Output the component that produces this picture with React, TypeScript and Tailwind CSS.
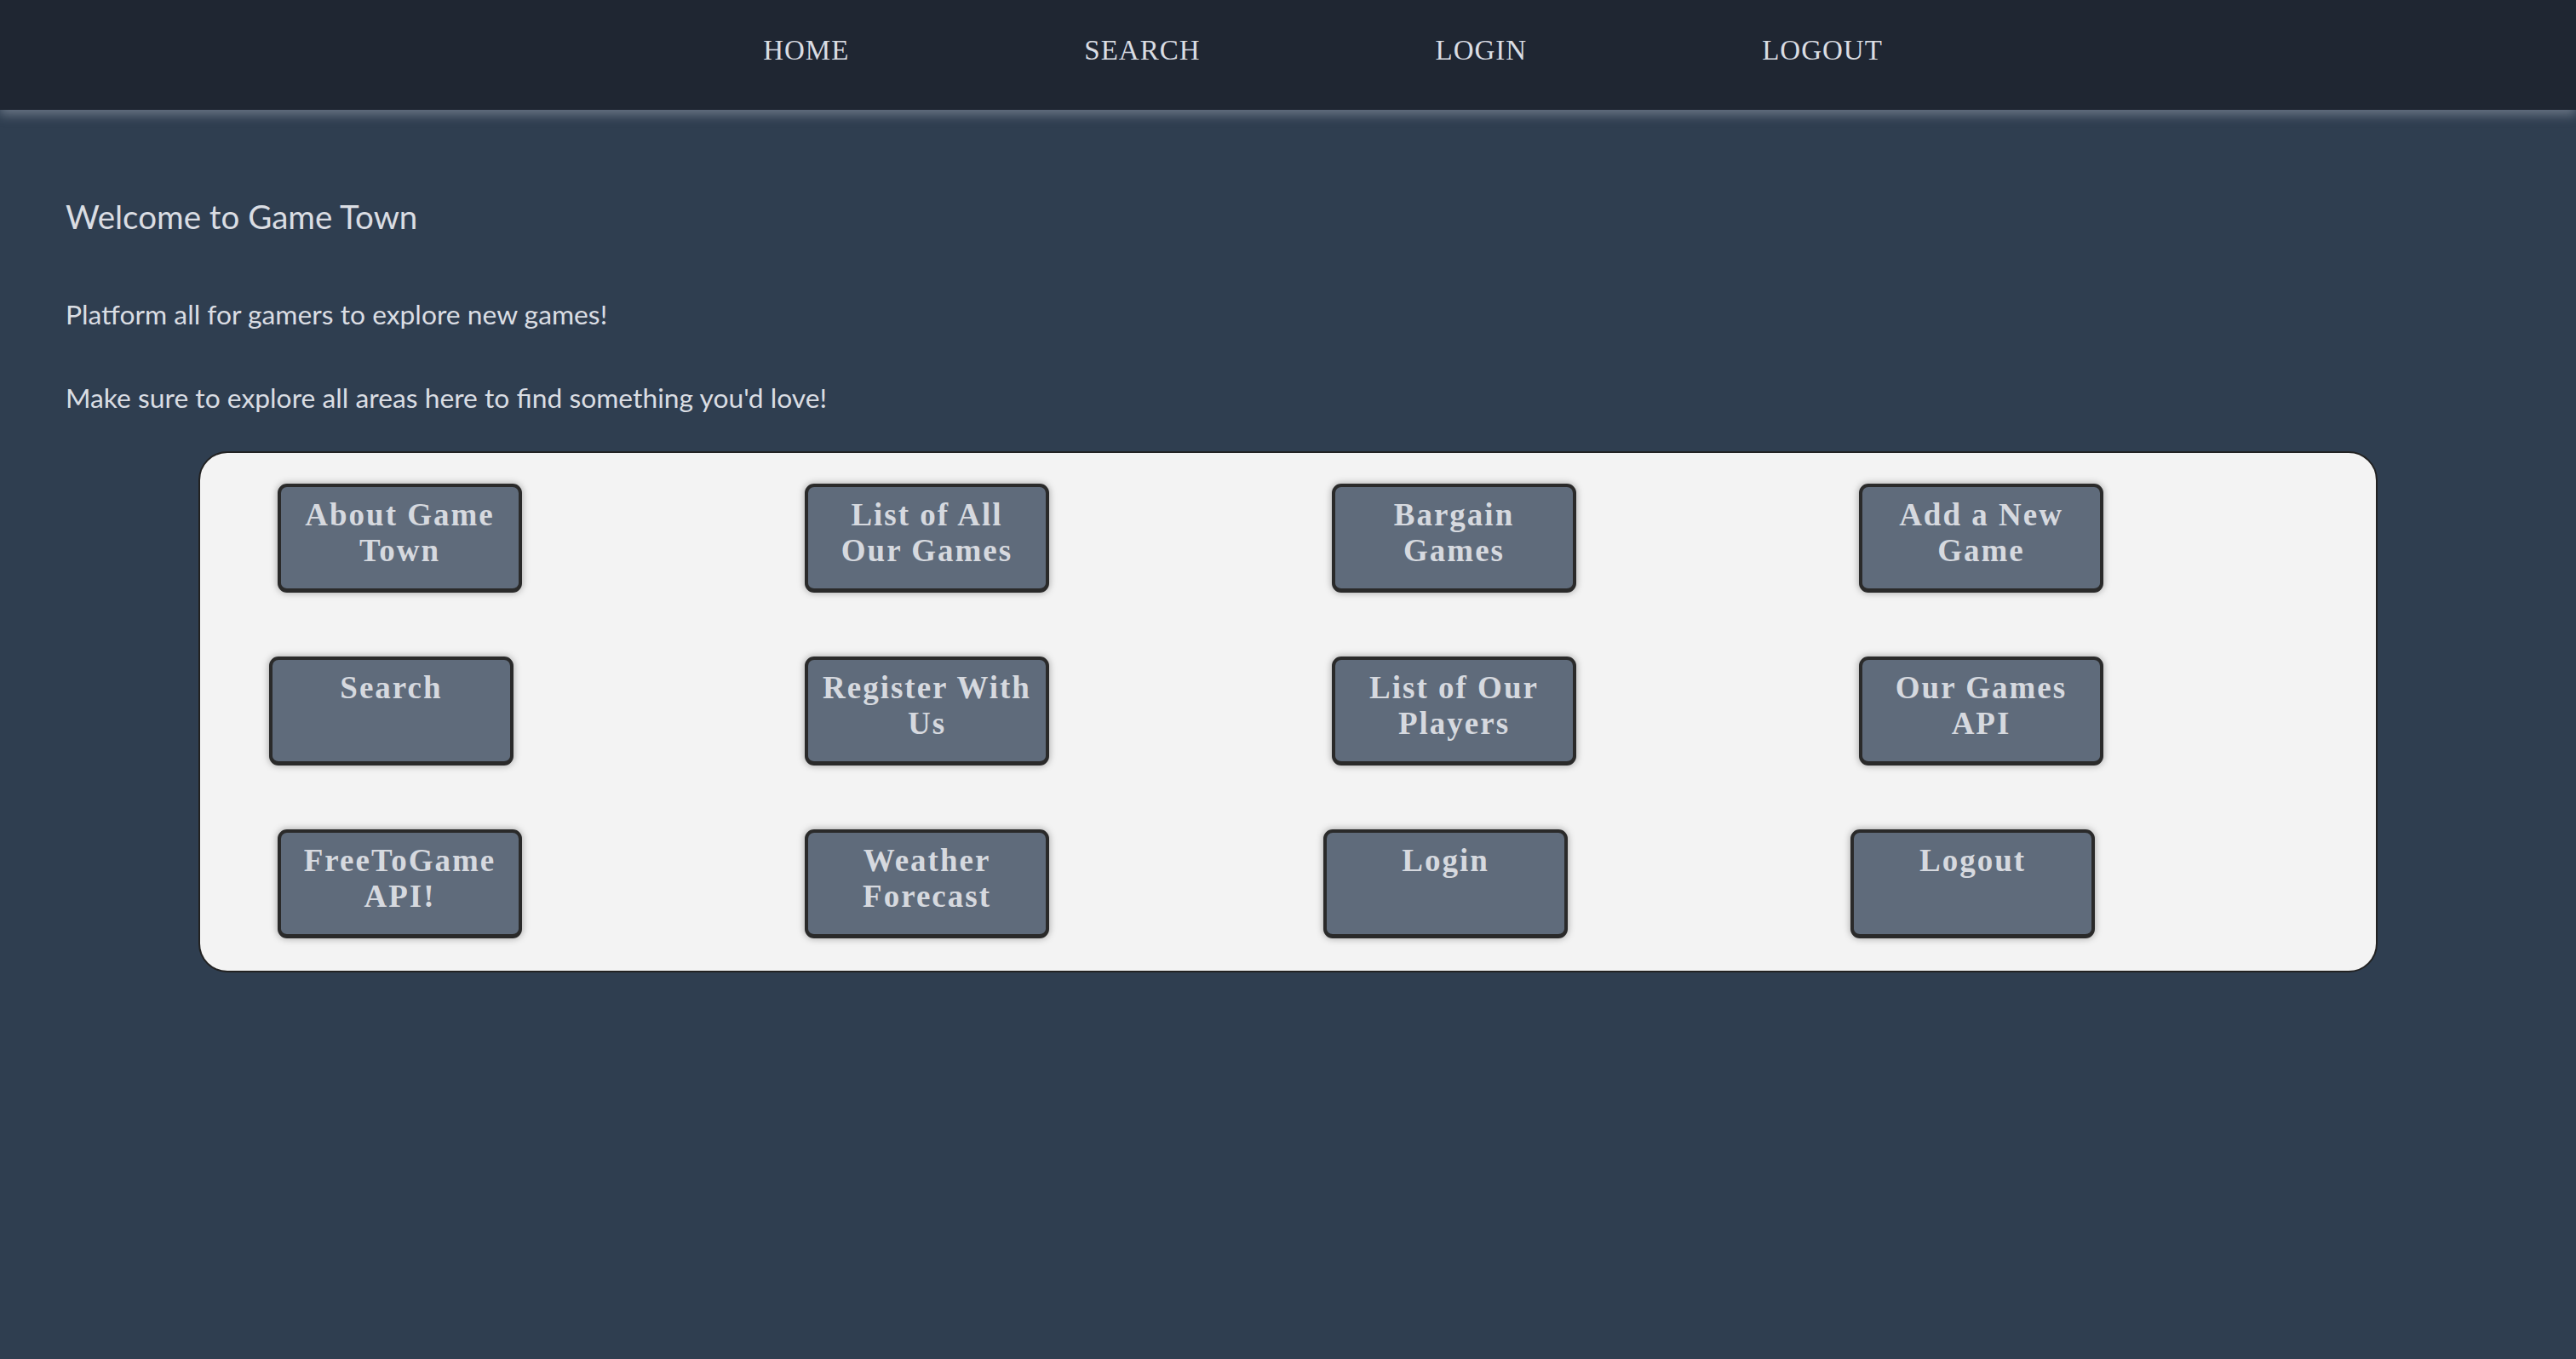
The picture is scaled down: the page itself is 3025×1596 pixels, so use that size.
import React from "react";

const navItems = ["HOME", "SEARCH", "LOGIN", "LOGOUT"];

type Btn = { label: string; shift?: boolean };

const buttons: Btn[] = [
  { label: "About Game Town" },
  { label: "List of All Our Games" },
  { label: "Bargain Games" },
  { label: "Add a New Game" },
  { label: "Search", shift: true },
  { label: "Register With Us" },
  { label: "List of Our Players" },
  { label: "Our Games API" },
  { label: "FreeToGame API!" },
  { label: "Weather Forecast" },
  { label: "Login", shift: true },
  { label: "Logout", shift: true },
];

export default function App() {
  return (
    <div className="min-h-[1596px] w-full bg-[#2f3e50]">
      <nav className="relative z-10 h-[129px] w-full bg-[#1f2632] shadow-[0_6px_12px_rgba(210,215,225,0.35)]">
        <ul className="flex justify-center gap-[276px] pl-[82px] pt-[39px]">
          {navItems.map((n) => (
            <li
              key={n}
              className="text-[33px] leading-[40px] tracking-[1px] text-[#dadde3]"
              style={{ fontFamily: '"Liberation Serif", "Times New Roman", serif' }}
            >
              {n}
            </li>
          ))}
        </ul>
      </nav>
      <main className="pt-[101px]">
        <div
          className="pl-[77px] text-[#dadde3]"
          style={{ fontFamily: 'Lato, "Open Sans", sans-serif' }}
        >
          <h1 className="text-[38.5px] leading-[48px] font-normal">Welcome to Game Town</h1>
          <p className="mt-[71px] text-[31.8px] leading-[40px]">
            Platform all for gamers to explore new games!
          </p>
          <p className="mt-[58px] text-[31.8px] leading-[40px]">
            Make sure to explore all areas here to find something you'd love!
          </p>
        </div>
        <div className="mx-auto mt-[43px] w-[2559px] rounded-[34px] border-2 border-[#222] bg-[#f3f3f3] pb-[38px] pl-[91px] pt-[36px]">
          <div className="grid grid-cols-[repeat(4,619px)] gap-y-[75px]">
            {buttons.map((b) => (
              <div key={b.label} className={b.shift ? "-ml-[10px]" : ""}>
                <button
                  className="flex h-[128px] w-[287px] flex-col items-center justify-start rounded-[11px] border-4 border-b-[5px] border-[#2a2a2a] bg-[#5f6b7b] px-[10px] pt-[12px] text-center text-[37px] font-bold leading-[42px] tracking-[2px] text-[#d6d9df] shadow-[0_0_9px_rgba(0,0,0,0.35)]"
                  style={{ fontFamily: '"Liberation Serif", "Times New Roman", serif' }}
                >
                  <span className="block">{b.label}</span>
                </button>
              </div>
            ))}
          </div>
        </div>
      </main>
    </div>
  );
}
